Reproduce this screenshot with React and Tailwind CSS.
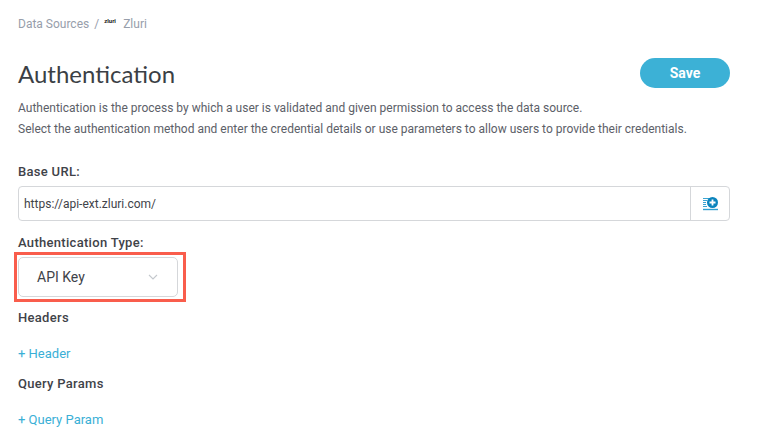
const labelClass = "text-[13px] leading-[16px] font-medium tracking-[0.3px] text-[#3f4349]";
const linkClass = "text-[13px] leading-[16px] text-[#3aafd6]";

const AddIcon = () => (
  <svg width="15" height="14" viewBox="0 0 15 14">
    <path d="M0 1.5h8M0 3.5h4M0 5.5h3M0 7.5h3M0 9.5h4" stroke="#3aa4d2" strokeWidth="1" fill="none" />
    <path d="M0 12.5h15" stroke="#2f9fd0" strokeWidth="1.4" fill="none" />
    <circle cx="9.5" cy="5.5" r="5.5" fill="#0b84bd" />
    <path d="M9.5 2.5v6M6.5 5.5h6" stroke="#fff" strokeWidth="1.8" fill="none" />
  </svg>
);

const Chevron = () => (
  <svg width="10" height="6" viewBox="0 0 10 6">
    <path d="M1 1l4 4 4-4" stroke="#c4c8cd" strokeWidth="1.1" fill="none" />
  </svg>
);

export default function App() {
  return (
    <div className="w-[764px] h-[446px] overflow-hidden bg-white px-[18px] font-['Roboto',sans-serif]">
      <div className="flex items-center h-[16px] mt-[16px] text-[12px] text-[#979eab]">
        <span>Data Sources</span>
        <span className="ml-[5px]">/</span>
        <span className="ml-[5px] -mt-[7px] w-[16px] text-[6px] leading-[8px] font-bold text-[#222]">zluri</span>
        <span className="ml-[3px]">Zluri</span>
      </div>

      <div className="flex justify-between items-start w-[712px] mt-[26px]">
        <h1 className="font-['Lato',sans-serif] text-[24px] leading-[30px] mt-[1px] text-[#3b3f45]">Authentication</h1>
        <button className="w-[90px] h-[30px] rounded-full bg-[#3cb1d6] text-white text-[14px] font-bold">Save</button>
      </div>

      <p className="mt-[9px] text-[12px] leading-[21px] text-[#5c6068]">
        Authentication is the process by which a user is validated and given permission to access the data source.
        <br />
        Select the authentication method and enter the credential details or use parameters to allow users to provide their credentials.
      </p>

      <div className={`${labelClass} mt-[24px]`}>Base URL:</div>
      <div className="flex w-[712px] h-[35px] mt-[6px] border border-[#d5d7da] rounded-[4px]">
        <div className="flex-1 flex items-center pl-[5px] text-[12px] text-[#3f4349]">https://api-ext.zluri.com/</div>
        <div className="w-[39px] flex items-center justify-center border-l border-[#d5d7da]"><AddIcon /></div>
      </div>

      <div className={`${labelClass} mt-[14px]`}>Authentication Type:</div>
      <div className="-ml-[4px] mt-[1px] w-[172px] h-[50px] border-[3px] border-[#f95d4c] pl-[1px] pt-[2px]">
        <div className="flex items-center justify-between w-[160px] h-[40px] border border-[#d5d7da] rounded-[5px] pl-[18px] pr-[19px] text-[14px] text-[#3f4349]">
          <span>API Key</span>
          <Chevron />
        </div>
      </div>

      <div className={`${labelClass} mt-[8px]`}>Headers</div>
      <div className={`${linkClass} mt-[20px]`}>+ Header</div>
      <div className={`${labelClass} mt-[14px]`}>Query Params</div>
      <div className={`${linkClass} mt-[20px]`}>+ Query Param</div>
    </div>
  );
}
